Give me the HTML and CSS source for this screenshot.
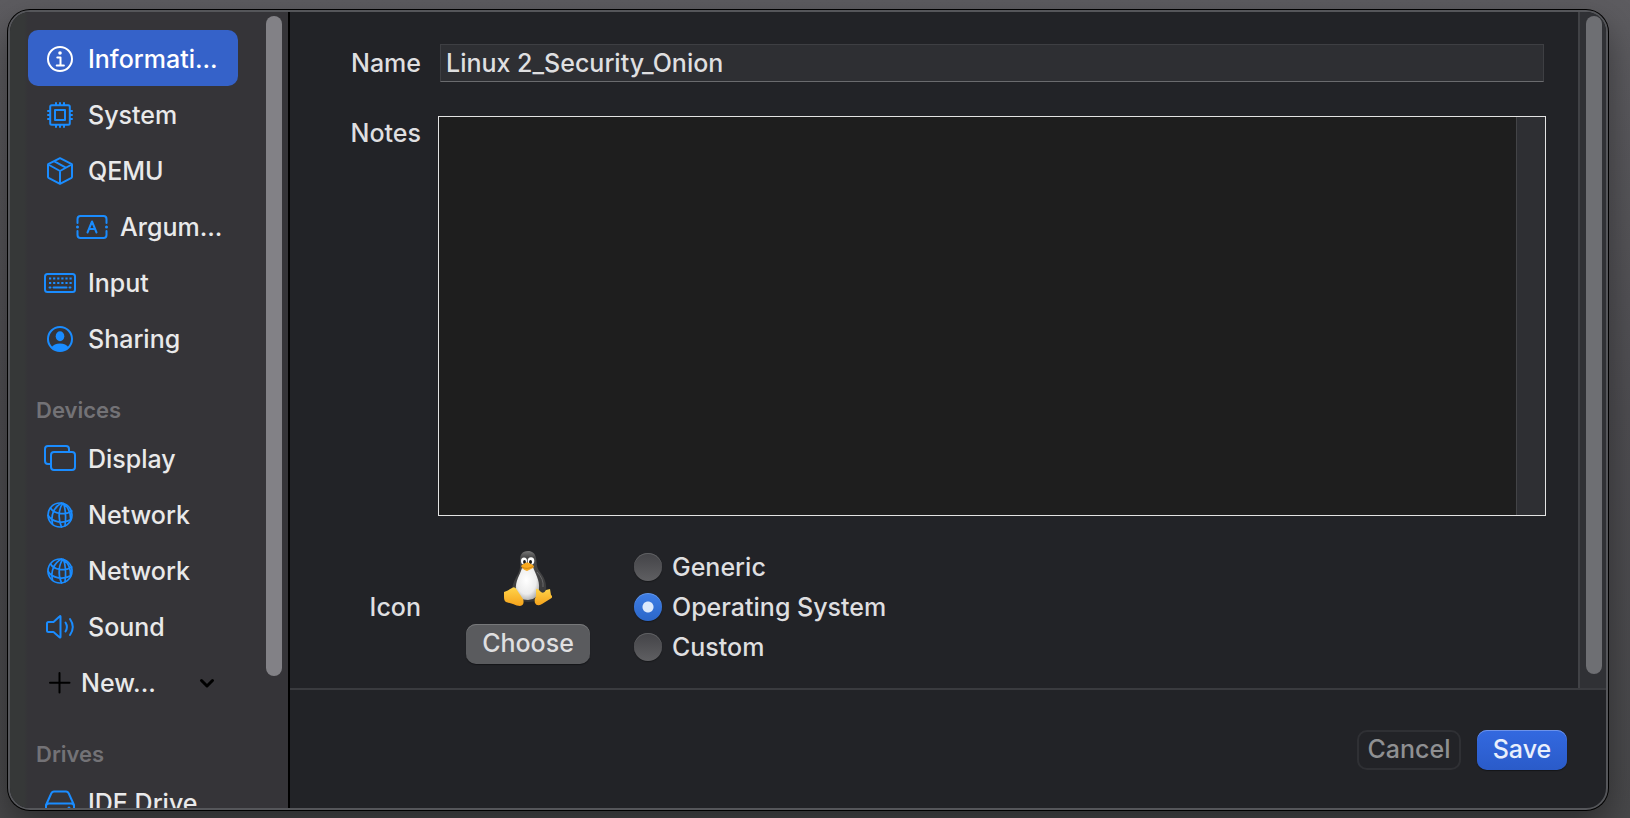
FILE: index.html
```
<!DOCTYPE html>
<html lang="en">
<head>
<meta charset="utf-8">
<title>Virtual machine settings</title>
<link rel="stylesheet" href="styles.css">
</head>
<body>
<svg class="defs" aria-hidden="true">
  <symbol id="globe" viewBox="0 0 32 32">
    <circle cx="16" cy="17" r="12"/>
    <path d="M19 5.300C15 10 13.500 20 17.500 29M17.500 5C10 9 6.500 17 8.500 26M19.500 5.500C21.500 11 22 20 21 28M20 5.600C25 10 27 15 26.500 22M6.500 10C10 16 21 17.500 27.800 13M4.200 17.500C8 24.500 20 26 27 21.500"/>
  </symbol>
</svg>
<div class="window">
  <aside class="sidebar">
    <nav class="nav">
      <a class="item selected" href="#information">
        <svg class="icon" viewBox="0 0 32 32"><circle cx="16" cy="16" r="12"/><circle class="solid" cx="16" cy="10" r="1.800"/><path d="M13.300 14.500h3.200v8M12.700 22.500h7.200"/></svg>
        <span>Informati...</span>
      </a>
      <a class="item" href="#system">
        <svg class="icon" viewBox="0 0 32 32"><rect x="6.200" y="6.200" width="19.600" height="19.600" rx="1.500"/><rect x="11" y="11" width="10" height="10"/><path d="M12 6V4M16 6V4M20 6V4M12 28v-2M16 28v-2M20 28v-2M6 12H4M6 16H4M6 20H4M28 12h-2M28 16h-2M28 20h-2"/></svg>
        <span>System</span>
      </a>
      <a class="item" href="#qemu">
        <svg class="icon" viewBox="0 0 32 32"><path d="M16 3.200L27.800 9.200Q28 9.300 28 10V21.800Q28 22.500 27.500 22.800L16 28.800L4.500 22.800Q4 22.500 4 21.800V10Q4 9.300 4.200 9.200ZM4.300 9.500L16 16L27.700 9.500M16 16V28.500M10 6.200L21.800 12.600"/></svg>
        <span>QEMU</span>
      </a>
      <a class="item child" href="#arguments">
        <svg class="icon" viewBox="0 0 32 32"><path d="M1.500 12V8Q1.500 5 4.500 5H27.500Q30.500 5 30.500 8V12M1.500 20V24Q1.500 27 4.500 27H27.500Q30.500 27 30.500 24V20M11.500 21.500L16 10.500L20.500 21.500M13 18H19"/><circle class="solid" cx="1.500" cy="16" r="1.500"/><circle class="solid" cx="30.500" cy="16" r="1.500"/></svg>
        <span>Argum...</span>
      </a>
      <a class="item" href="#input">
        <svg class="icon" viewBox="0 0 32 32"><rect x="1" y="7" width="30" height="18" rx="2.500"/><path class="keys" d="M5 11.500h24M5 16h24"/><path d="M5.500 20.500h1M9.500 20.500h13M25.500 20.500h1"/></svg>
        <span>Input</span>
      </a>
      <a class="item" href="#sharing">
        <svg class="icon" viewBox="0 0 32 32"><circle cx="16" cy="16" r="12"/><ellipse class="solid" cx="16" cy="13.300" rx="4.300" ry="5"/><path class="solid" d="M7.500 24.300Q10 20.500 16 20.500T24.500 24.300Q21 28 16 28T7.500 24.300Z"/></svg>
        <span>Sharing</span>
      </a>
      <h2 class="heading">Devices</h2>
      <a class="item" href="#display">
        <svg class="icon" viewBox="0 0 32 32"><path d="M7 21H4Q1 21 1 18V6Q1 3 4 3H22Q25 3 25 6V8.500"/><rect x="7" y="9" width="24" height="18" rx="3"/></svg>
        <span>Display</span>
      </a>
      <a class="item" href="#network-1"><svg class="icon" viewBox="0 1 32 32"><use href="#globe" width="32" height="32"/></svg><span>Network</span></a>
      <a class="item" href="#network-2"><svg class="icon" viewBox="0 1 32 32"><use href="#globe" width="32" height="32"/></svg><span>Network</span></a>
      <a class="item" href="#sound">
        <svg class="icon" viewBox="0 0 32 32"><path d="M16.500 5.500V26Q16.500 27 15.500 26.200L9.500 21H4.500Q3 21 3 19.500V12.500Q3 11 4.500 11H9.500L15.500 5.500Q16.500 4.500 16.500 5.500ZM21.500 11.500Q24.300 16 21.500 20.500M26 8Q31.600 16 26 24"/></svg>
        <span>Sound</span>
      </a>
      <button class="item new" type="button">
        <svg class="icon dark" viewBox="0 0 32 32"><path d="M15.500 6V25.500M6 15.700H25.500"/></svg>
        <span>New...</span>
        <svg class="chevron" viewBox="0 0 16 16"><path d="M2.500 5.500L8 11L13.500 5.500"/></svg>
      </button>
      <h2 class="heading">Drives</h2>
      <a class="item" href="#ide-drive">
        <svg class="icon" viewBox="0 0 32 32"><path d="M2 18L7 7Q8 4.500 10 4.500H22Q24 4.500 25 7L30 18V23Q30 25 28 25H4Q2 25 2 23V19Q2 16.500 5 16.500H27Q30 16.500 30 19"/><circle class="solid" cx="25" cy="21" r="1.500"/></svg>
        <span>IDE Drive</span>
      </a>
    </nav>
    <div class="track"><div class="thumb side-thumb"></div></div>
  </aside>
  <main class="main">
    <div class="scroll">
      <form class="form" id="settings">
        <label class="label" for="name">Name</label>
        <input class="name" id="name" type="text" value="Linux 2_Security_Onion">
        <label class="label notes-label" for="notes">Notes</label>
        <div class="notes-box">
          <textarea class="notes" id="notes"></textarea>
          <div class="notes-gutter"></div>
        </div>
        <span class="label" id="icon-label">Icon</span>
        <div class="icon-row">
          <div class="picker">
            <svg class="tux" viewBox="0 0 48 56" role="img" aria-label="Linux penguin">
              <defs>
                <linearGradient id="coat" x1="0" y1="0" x2="0" y2="1"><stop offset="0" stop-color="#777"/><stop offset=".12" stop-color="#4a4a4b"/><stop offset="1" stop-color="#363637"/></linearGradient>
                <radialGradient id="belly" cx=".45" cy=".4" r=".65"><stop offset="0" stop-color="#fff"/><stop offset=".65" stop-color="#ececec"/><stop offset="1" stop-color="#aaa"/></radialGradient>
                <linearGradient id="foot" x1="0" y1="0" x2="0" y2="1"><stop offset="0" stop-color="#ffd44a"/><stop offset="1" stop-color="#f5a21b"/></linearGradient>
              </defs>
              <path fill="url(#coat)" d="M24 1C18 1 16 5 16 10C16 16 17 18 14 24C11 29 9 33 8 39L15 50Q24 54 34 50L42 41C43 33 40 27 36 22C32 17 33 13 32 8C31 3 28 1 24 1Z"/>
              <path fill="url(#belly)" d="M18 18Q23 22 29 17C31 23 36 30 35 39Q34 50 24 50Q14 50 12 40C11 31 16 25 18 18Z"/>
              <path fill="none" stroke="#68686a" d="M33 22Q40 29 39 37"/>
              <ellipse cx="20" cy="11" rx="3" ry="3.500" fill="#fff"/><ellipse cx="27" cy="11" rx="3.300" ry="3.700" fill="#fff"/>
              <ellipse cx="20.500" cy="12" rx="1.400" ry="2" fill="#151515"/><ellipse cx="26.500" cy="12" rx="1.500" ry="2" fill="#151515"/>
              <path fill="#f9a91e" d="M17 16Q21 12 24 12.500Q28 14 30 16Q30 18 27 19L23 21Q19 20 17 16Z"/>
              <path fill="none" stroke="#c97f0c" stroke-width=".8" d="M18 17Q23 20 29 16.500"/>
              <path fill="url(#foot)" d="M0 42Q5 40 8 38Q11 36 13 40L19 49Q21 55 16 56Q13 56 9 54L2 52Q0 51 0 47Z"/>
              <path fill="url(#foot)" d="M32 40Q32 38 34 39L37 42Q40 44 42 40L46 39L47 45Q50 47 46 49L38 54Q33 57 31 53Q30 50 32 46Z"/>
            </svg>
            <button class="button choose" type="button">Choose</button>
          </div>
          <div class="radios" role="radiogroup" aria-labelledby="icon-label">
            <label class="option"><input class="radio" type="radio" name="icon">Generic</label>
            <label class="option"><input class="radio" type="radio" name="icon" checked>Operating System</label>
            <label class="option"><input class="radio" type="radio" name="icon">Custom</label>
          </div>
        </div>
      </form>
      <div class="gutter"><div class="thumb main-thumb"></div></div>
    </div>
    <footer class="footer">
      <button class="button cancel" type="button">Cancel</button>
      <button class="button save" type="submit" form="settings">Save</button>
    </footer>
  </main>
</div>
</body>
</html>
```
FILE: styles.css
```
* { box-sizing: border-box; }

body {
  margin: 0;
  height: 100vh;
  padding: 10px 22px 8px 8px;
  display: flex;
  overflow: hidden;
  background: linear-gradient(#5d5c60, #4e4d51 50%, #48484a);
  color: #dfdfe0;
  font: 500 25px/32px Inter, "Liberation Sans", sans-serif;
}

.defs { position: absolute; width: 0; height: 0; }

.window {
  flex: 1;
  display: flex;
  overflow: hidden;
  border: 2px solid #55565a;
  border-radius: 22px;
  background: #222327;
  box-shadow: 0 0 0 1px #000, 0 16px 36px rgba(0, 0, 0, .4);
}

.sidebar {
  flex: none;
  width: 280px;
  display: flex;
  overflow: hidden;
  border-right: 2px solid #000;
  background: linear-gradient(90deg, #363838 14px, #353438 18px);
}

.nav { flex: 1; min-width: 0; padding: 18px 50px 0 18px; }

.item {
  display: flex;
  align-items: center;
  gap: 12px;
  width: 100%;
  height: 56px;
  padding: 2px 12px 0 16px;
  border: 0;
  border-radius: 10px;
  background: none;
  color: #e9e9ea;
  font: inherit;
  text-align: left;
  text-decoration: none;
  white-space: nowrap;
}

.item.selected { background: #3562c9; color: #fff; }
.item.child { padding-left: 48px; }
.item.new { gap: 5px; }

.icon {
  flex: none;
  width: 32px;
  height: 32px;
  overflow: visible;
  fill: none;
  stroke: #1a8cff;
  stroke-width: 2;
  stroke-linecap: round;
  stroke-linejoin: round;
}

.icon .solid { fill: #1a8cff; stroke: none; }
.icon .keys { stroke-dasharray: 2.2 1.9; stroke-linecap: butt; stroke-width: 2.2; }
.selected .icon { stroke: #fff; }
.selected .icon .solid { fill: #fff; }
.icon.dark { stroke: #000; }

#globe { stroke-width: 1.7; }

.chevron {
  width: 16px;
  height: 16px;
  margin: 0 11px 0 auto;
  fill: none;
  stroke: #000;
  stroke-width: 3;
  stroke-linecap: round;
  stroke-linejoin: round;
}

.heading {
  margin: 0;
  padding: 25px 0 0 8px;
  color: #737276;
  font-size: 22px;
  font-weight: 600;
  line-height: 39px;
}

.track { flex: none; width: 0; }

.thumb { width: 16px; border-radius: 8px; }
.side-thumb { margin: 4px 0 0 -22px; height: 83vh; max-height: 660px; background: #828186; }

.main { flex: 1; min-width: 0; display: flex; flex-direction: column; }

.scroll { display: flex; border-bottom: 2px solid #3a3b3f; }

.form {
  flex: 1;
  display: grid;
  grid-template-columns: 131px 1fr;
  column-gap: 17px;
  row-gap: 34px;
  align-items: center;
  padding: 32px 32px 24px 0;
}

.label { text-align: right; }
.notes-label { align-self: start; padding-top: 1px; }

.name {
  height: 38px;
  min-width: 0;
  margin: 0 2px;
  padding: 0 5px;
  border: 1px solid #3e3f43;
  border-bottom-color: #6a6b6e;
  background: #2e2f33;
  color: inherit;
  font: inherit;
}

.notes-box { display: flex; height: 400px; border: 1px solid #e3e3e3; }

.notes {
  flex: 1;
  border: 0;
  padding: 4px;
  outline: 0;
  resize: none;
  background: #1e1e1e;
  color: inherit;
  font: inherit;
}

.notes-gutter { width: 29px; border-left: 1px solid #434447; background: #2e2f33; }

.icon-row { display: flex; align-items: center; gap: 44px; padding-left: 28px; }

.picker { display: flex; flex-direction: column; align-items: center; gap: 18px; }
.tux { width: 48px; height: 56px; }

.button {
  height: 40px;
  padding: 0 0 2px;
  border: 0;
  border-radius: 10px;
  color: inherit;
  font: inherit;
}

.choose { width: 124px; background: #5a5b5e; box-shadow: inset 0 1px #77787a, 0 1px 1px #151619; }

.radios { display: flex; flex-direction: column; gap: 8px; }
.option { display: flex; align-items: center; gap: 10px; }

.radio {
  appearance: none;
  width: 28px;
  height: 28px;
  margin: 0;
  border-radius: 50%;
  background: linear-gradient(#434347, #5f5f62);
  box-shadow: inset 0 1px #5f6063, 0 1px 1px #17181a;
}

.radio:checked {
  background: radial-gradient(circle, #dde9fb 5px, transparent 6px), linear-gradient(#3f7ee6, #2b66c8);
  box-shadow: inset 0 1px #6699e8, 0 1px 1px #17181a;
}

.gutter {
  flex: none;
  width: 28px;
  display: flex;
  padding: 4px 0 14px 6px;
  border-left: 2px solid #414246;
  background: #303135;
}

.main-thumb { background: #6e6f73; }

.footer { display: flex; justify-content: flex-end; gap: 16px; padding: 40px 39px; }

.cancel { width: 104px; border: 2px solid #2f3034; background: none; color: #8f9092; }

.save {
  width: 90px;
  background: linear-gradient(#3369e0, #2a5bc9);
  box-shadow: inset 0 1px #6c92ea, 0 1px 1px #151619;
  color: #e9effc;
}
```
